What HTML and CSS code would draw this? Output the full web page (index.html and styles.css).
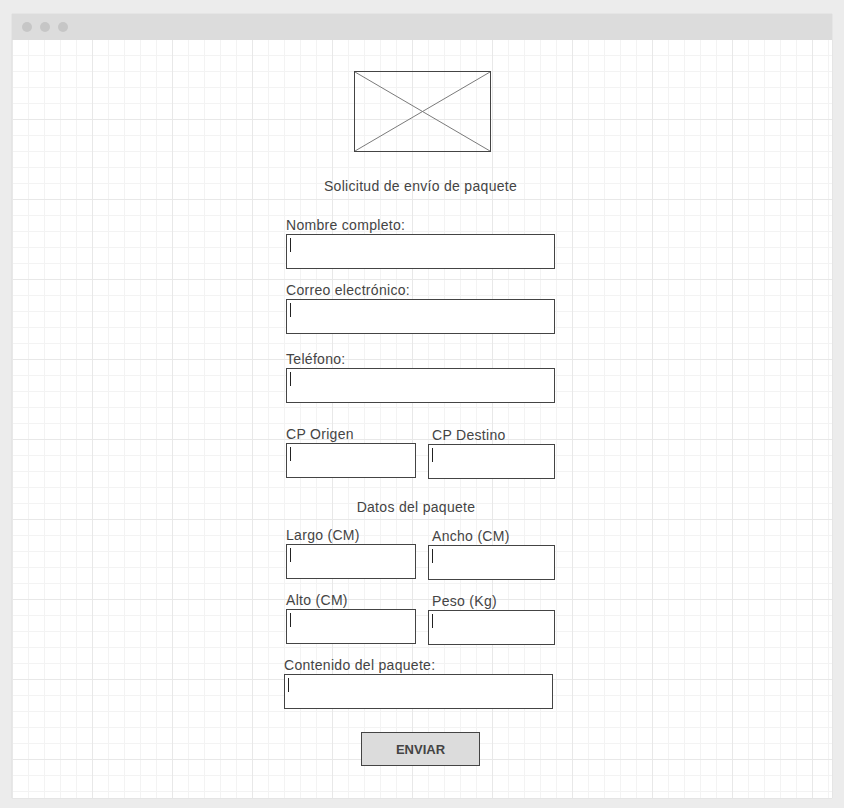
FILE: index.html
```html
<!DOCTYPE html>
<html lang="es">
<head>
<meta charset="utf-8">
<title>Solicitud de envío de paquete</title>
<link rel="stylesheet" href="styles.css">
</head>
<body>
<div class="window">
  <div class="titlebar">
    <span class="dot"></span><span class="dot"></span><span class="dot"></span>
  </div>
  <div class="content">
    <form class="form">
      <div class="placeholder">
        <svg width="137" height="81" viewBox="0 0 137 81" preserveAspectRatio="none">
          <line x1="0" y1="0" x2="137" y2="81" stroke="#777" stroke-width="1"/>
          <line x1="137" y1="0" x2="0" y2="81" stroke="#777" stroke-width="1"/>
        </svg>
      </div>
      <div class="title">Solicitud de envío de paquete</div>

      <div class="field f-nombre">
        <div class="label">Nombre completo:</div>
        <div class="box"><span class="caret"></span></div>
      </div>
      <div class="field f-correo">
        <div class="label">Correo electrónico:</div>
        <div class="box"><span class="caret"></span></div>
      </div>
      <div class="field f-tel">
        <div class="label">Teléfono:</div>
        <div class="box"><span class="caret"></span></div>
      </div>

      <div class="row r-cp">
        <div class="col left">
          <div class="label">CP Origen</div>
          <div class="box"><span class="caret"></span></div>
        </div>
        <div class="col right">
          <div class="label">CP Destino</div>
          <div class="box"><span class="caret"></span></div>
        </div>
      </div>

      <div class="subtitle">Datos del paquete</div>

      <div class="row r-dim">
        <div class="col left">
          <div class="label">Largo (CM)</div>
          <div class="box"><span class="caret"></span></div>
        </div>
        <div class="col right">
          <div class="label">Ancho (CM)</div>
          <div class="box"><span class="caret"></span></div>
        </div>
      </div>
      <div class="row r-dim">
        <div class="col left">
          <div class="label">Alto (CM)</div>
          <div class="box"><span class="caret"></span></div>
        </div>
        <div class="col right">
          <div class="label">Peso (Kg)</div>
          <div class="box"><span class="caret"></span></div>
        </div>
      </div>

      <div class="field f-cont">
        <div class="label">Contenido del paquete:</div>
        <div class="box"><span class="caret"></span></div>
      </div>

      <div class="btn">ENVIAR</div>
    </form>
  </div>
</div>
</body>
</html>
```
FILE: styles.css
```css
* { box-sizing: border-box; }
html, body { margin: 0; padding: 0; }
body {
  background: #ececec;
  font-family: "Liberation Sans", Arial, sans-serif;
  color: #444;
  width: 844px;
  height: 808px;
  overflow: hidden;
}
.window {
  margin: 14px 0 0 12px;
  width: 820px;
  height: 784px;
  background: #fff;
  box-shadow: 0 0 1px rgba(0,0,0,0.18);
  display: flex;
  flex-direction: column;
}
.titlebar {
  height: 26px;
  background: #dcdcdc;
  display: flex;
  align-items: center;
  gap: 8px;
  padding-left: 10px;
}
.dot {
  width: 10px;
  height: 10px;
  border-radius: 50%;
  background: #c6c6c6;
}
.content {
  flex: 1;
  background-color: #fff;
  background-image:
    linear-gradient(to right, #e8e8e8 1px, transparent 1px),
    linear-gradient(to bottom, #e8e8e8 1px, transparent 1px),
    linear-gradient(to right, #f3f3f3 1px, transparent 1px),
    linear-gradient(to bottom, #f3f3f3 1px, transparent 1px);
  background-size: 80px 80px, 80px 80px, 16px 16px, 16px 16px;
  background-position: 0 0, 0 -1px, 0 0, 0 -1px;
  padding-top: 31px;
}
.form {
  margin: 0 0 0 274px;
  width: 269px;
  display: flex;
  flex-direction: column;
  font-size: 14px;
  letter-spacing: 0.3px;
  line-height: 16px;
}
.placeholder {
  margin-left: 68px;
  width: 137px;
  height: 81px;
  border: 1px solid #444;
  overflow: hidden;
}
.placeholder svg { display: block; width: 135px; height: 79px; }
.title {
  margin-top: 26px;
  height: 16px;
  text-align: center;
  white-space: nowrap;
}
.label { height: 16px; line-height: 14px; white-space: nowrap; }
.box {
  height: 35px;
  border: 1px solid #444;
  background: #fff;
  padding: 3px 0 0 3px;
}
.caret {
  display: block;
  width: 1px;
  height: 14px;
  background: #222;
}
.f-nombre { margin-top: 24px; }
.f-correo { margin-top: 14px; }
.f-tel { margin-top: 18px; }
.row {
  display: flex;
  gap: 12px;
  height: 52px;
}
.r-cp { margin-top: 24px; }
.r-dim { margin-top: 13px; }
.col.left { width: 130px; }
.col.right { width: 127px; padding-top: 1px; }
.col.right .label { padding-left: 4px; }
.subtitle {
  margin-top: 20px;
  height: 16px;
  text-align: center;
  padding-right: 9px;
}
.f-cont { margin-top: 13px; margin-left: -2px; width: 269px; }
.btn {
  margin-top: 23px;
  margin-left: 75px;
  width: 119px;
  height: 34px;
  border: 1px solid #444;
  background: #dcdcdc;
  font-size: 13px;
  font-weight: bold;
  letter-spacing: 0;
  display: flex;
  align-items: center;
  justify-content: center;
  padding-top: 2px;
}
```
